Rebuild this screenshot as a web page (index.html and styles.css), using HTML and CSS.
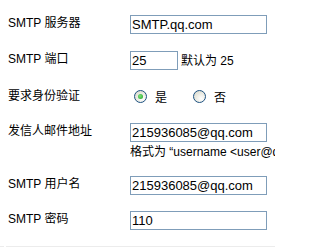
FILE: index.html
```
<!DOCTYPE html>
<html>
<head>
<meta charset="utf-8">
<link rel="stylesheet" href="styles.css">
</head>
<body>
<div class="form">
  <div class="row r1">
    <div class="label">SMTP 服务器</div>
    <div class="field"><span class="input wide">SMTP.qq.com</span></div>
  </div>
  <div class="row r2">
    <div class="label">SMTP 端口</div>
    <div class="field"><span class="input short">25</span><span class="note">默认为 25</span></div>
  </div>
  <div class="row r3">
    <div class="label">要求身份验证</div>
    <div class="field radios">
      <span class="radio checked"></span><span class="rtext">是</span>
      <span class="radio"></span><span class="rtext">否</span>
    </div>
  </div>
  <div class="row r4">
    <div class="label">发信人邮件地址</div>
    <div class="field col">
      <span class="input wide">215936085@qq.com</span>
      <span class="hint">格式为 “username &lt;user@domain.com&gt;”</span>
    </div>
  </div>
  <div class="row r5">
    <div class="label">SMTP 用户名</div>
    <div class="field"><span class="input wide">215936085@qq.com</span></div>
  </div>
  <div class="row r6">
    <div class="label">SMTP 密码</div>
    <div class="field"><span class="input wide">110</span></div>
  </div>
  <div class="bottom"><span class="seg a"></span><span class="seg b"></span></div>
</div>
</body>
</html>
```
FILE: styles.css
```
html, body {
  margin: 0;
  padding: 0;
  background: #ffffff;
  overflow: hidden;
}
body {
  width: 275px;
  height: 248px;
  font-family: "Liberation Sans", "Noto Sans CJK SC", sans-serif;
  font-size: 12px;
  color: #000;
}
.form {
  padding-top: 7px;
  width: 275px;
  height: 248px;
  box-sizing: border-box;
  overflow: hidden;
}
.row {
  display: flex;
  align-items: flex-start;
}
.label {
  width: 130px;
  padding-left: 8px;
  box-sizing: border-box;
  height: 19px;
  line-height: 16px;
  white-space: nowrap;
  flex: none;
}
.field {
  display: flex;
  align-items: center;
  white-space: nowrap;
  min-width: 0;
  overflow: hidden;
}
.field.col {
  flex-direction: column;
  align-items: flex-start;
}
.input {
  display: block;
  box-sizing: border-box;
  height: 19px;
  border: 1px solid #7f9db9;
  font-size: 13px;
  line-height: 17px;
  padding-left: 1px;
  background: #fff;
  overflow: hidden;
  flex: none;
}
.wide { width: 137px; }
.short { width: 48px; margin-right: 3px; }
.note { line-height: 16px; }
.r1 { padding: 8px 0 9px; }
.r2 { padding: 8px 0 8px; }
.r3 { height: 36px; align-items: center; }
.r3 .label { height: auto; }
.r4 { padding: 9px 0 0; }
.hint { line-height: 16px; margin-top: 2px; }
.r5 { padding: 16px 0 0; }
.r6 { padding: 16px 0 0; }
.radios { height: 19px; }
.radio {
  width: 13px;
  height: 13px;
  box-sizing: border-box;
  border-radius: 50%;
  border: 1px solid #1c5180;
  background: radial-gradient(circle at 65% 70%, #ffffff 0%, #e6e6dc 60%, #d2d2c8 100%);
  margin-left: 4px;
  position: relative;
  flex: none;
}
.radio.checked::after {
  content: "";
  position: absolute;
  left: 3px;
  top: 3px;
  width: 5px;
  height: 5px;
  border-radius: 50%;
  background: radial-gradient(circle at 40% 40%, #7be27b 0%, #21a121 100%);
}
.rtext { margin-left: 8px; margin-right: 22px; }
.bottom {
  display: flex;
  margin-top: 16px;
  height: 1px;
}
.seg { height: 1px; background: #ececec; }
.seg.a { width: 4px; }
.seg.b { flex: 1; margin-left: 2px; }
```
